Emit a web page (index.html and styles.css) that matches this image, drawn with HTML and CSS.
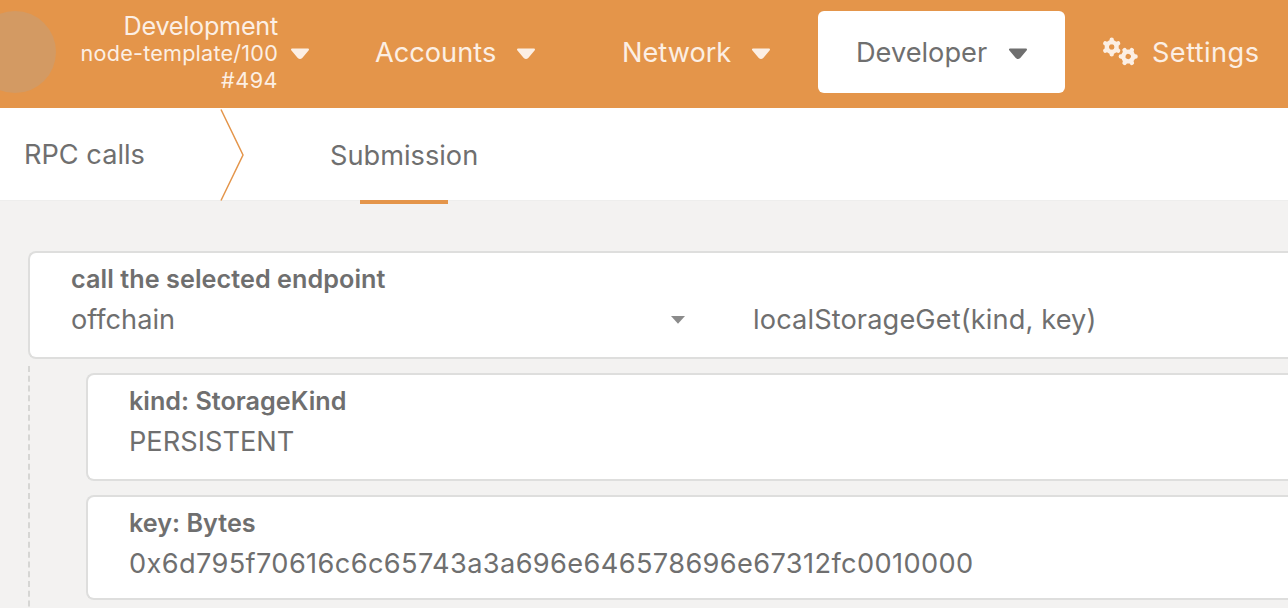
FILE: index.html
```
<!DOCTYPE html>
<html lang="en">
<head>
<meta charset="utf-8">
<title>RPC calls</title>
<link rel="stylesheet" href="styles.css">
</head>
<body>
<header class="topbar">
  <div class="logo"></div>
  <div class="chain">
    <div class="chain-name">Development</div>
    <div class="chain-spec">node-template/100</div>
    <div class="chain-block">#494</div>
  </div>
  <svg class="caret chain-caret" viewBox="0 0 20 12"><path d="M2 1.5H18L11.5 9.3Q10 10.9 8.5 9.3Z"/></svg>
  <nav class="menu">
    <div class="item accounts"><span class="name">Accounts</span><svg class="caret" viewBox="0 0 20 12"><path d="M2 1.5H18L11.5 9.3Q10 10.9 8.5 9.3Z"/></svg></div>
    <div class="item network"><span class="name">Network</span><svg class="caret" viewBox="0 0 20 12"><path d="M2 1.5H18L11.5 9.3Q10 10.9 8.5 9.3Z"/></svg></div>
    <div class="item active"><span class="name">Developer</span><svg class="caret" viewBox="0 0 20 12"><path d="M2 1.5H18L11.5 9.3Q10 10.9 8.5 9.3Z"/></svg></div>
    <div class="item settings">
      <svg class="cogs" viewBox="0 0 36 30">
        <g transform="translate(9.7 10)"><circle r="4.9"/><path d="M0-7.3V-5M0 7.3V5M-6.4-3.7L-4.4-2.5M6.4 3.7L4.4 2.5M-6.4 3.7L-4.4 2.5M6.4-3.7L4.4-2.5"/></g>
        <g transform="translate(26.2 19.5) rotate(30)"><circle r="4.9"/><path d="M0-7.3V-5M0 7.3V5M-6.4-3.7L-4.4-2.5M6.4 3.7L4.4 2.5M-6.4 3.7L-4.4 2.5M6.4-3.7L4.4-2.5"/></g>
      </svg>
      <span class="name">Settings</span>
    </div>
  </nav>
</header>
<div class="tabs">
  <div class="title"><span>RPC calls</span></div>
  <svg class="chevron" viewBox="0 0 24 93"><path d="M1 1.5L23 47L1 92.5"/></svg>
  <div class="tab"><span>Submission</span></div>
</div>
<main>
  <section class="box">
    <div class="label endpoint">call the selected endpoint</div>
    <div class="row">
      <span class="module">offchain</span>
      <svg class="small-caret" viewBox="0 0 14 8"><path d="M0 0H14L7 7.7Z"/></svg>
      <span class="method">localStorageGet(kind, key)</span>
    </div>
  </section>
  <div class="params">
    <svg class="guide" viewBox="0 0 2 242"><path d="M1 0V242"/></svg>
    <section class="box">
      <div class="label kind">kind: StorageKind</div>
      <div class="row"><span class="kind-value">PERSISTENT</span></div>
    </section>
    <section class="box last">
      <div class="label key">key: Bytes</div>
      <div class="row"><span class="hex">0x6d795f70616c6c65743a3a696e646578696e67312fc0010000</span></div>
    </section>
  </div>
</main>
</body>
</html>
```
FILE: styles.css
```
* { box-sizing: border-box; }
body {
  margin: 0;
  width: 1288px;
  height: 608px;
  overflow: hidden;
  background: #f3f2f1;
  color: #6f6f6f;
  font: 27.2px/36px Inter, "Liberation Sans", sans-serif;
  white-space: nowrap;
}
svg { display: block; flex: none; }

.topbar { display: flex; height: 108px; background: #e4954a; color: #fcefe4; }
.logo { flex: none; width: 82px; height: 82px; margin: 11px 0 0 -26px; border-radius: 50%; background: #d39a63; }
.chain { flex: none; width: 222px; padding-top: 13px; text-align: right; font-size: 21.6px; line-height: 27px; }
.chain-name { font-size: 25.2px; letter-spacing: -0.25px; }
.chain-spec { letter-spacing: 0.22px; }
.chain-block { letter-spacing: 0.5px; }
.caret { width: 20px; height: 12px; fill: currentColor; stroke: currentColor; stroke-width: 2; stroke-linejoin: round; }
.chain-caret { margin: 48px 0 0 12px; }
.menu { display: flex; flex: none; margin-left: 65px; }
.item { display: flex; flex: none; align-items: center; height: 82px; margin-top: 11px; }
.name { padding-top: 2px; }
.item .caret { margin-top: 3px; }
.accounts { width: 247px; }
.network { width: 196px; }
.accounts .name { width: 141px; }
.network .name { width: 129px; }
.active { width: 247px; padding-left: 38px; border-radius: 6px; background: #fff; color: #6f6f6f; }
.active .name { width: 152px; }
.settings { padding-left: 37px; letter-spacing: 0.42px; }
.cogs { width: 36px; height: 30px; margin-right: 14px; fill: none; stroke: currentColor; stroke-width: 4.4; stroke-linecap: round; }

.tabs { display: flex; align-items: flex-start; height: 93px; background: #fff; border-bottom: 1px solid #eeeeed; }
.title { width: 220px; padding: 29px 0 0 24px; }
.chevron { width: 24px; height: 93px; fill: none; stroke: #e4954a; stroke-width: 1.5; }
.tab { display: flex; flex-direction: column; width: 148px; height: 96px; margin-left: 86px; padding-top: 30px; }
.tab::after { content: ""; width: 88px; height: 4px; margin: auto 0 0 30px; background: #e4954a; }

main { padding: 50px 0 0 28px; }
.box { height: 108px; padding: 8px 0 0 41px; border: 2px solid #dededd; border-right: 0; border-radius: 8px 0 0 8px; background: #fff; }
.label { font-size: 25.2px; font-weight: 600; line-height: 36px; }
.endpoint { letter-spacing: 0.06px; }
.row { display: flex; align-items: center; height: 36px; margin-top: 5px; }
.module { width: 600px; }
.small-caret { width: 14px; height: 8px; fill: #8b8b8b; }
.method { margin-left: 68px; letter-spacing: 0.12px; }
.hex { letter-spacing: 0.37px; }
.params { position: relative; display: flex; flex-direction: column; gap: 14px; padding: 14px 0 0 58px; }
.guide { position: absolute; left: 0; top: 7px; width: 2px; height: 242px; fill: none; stroke: #d6d6d4; stroke-width: 2; stroke-dasharray: 6 3.77; }
.last { height: 105px; }
```
